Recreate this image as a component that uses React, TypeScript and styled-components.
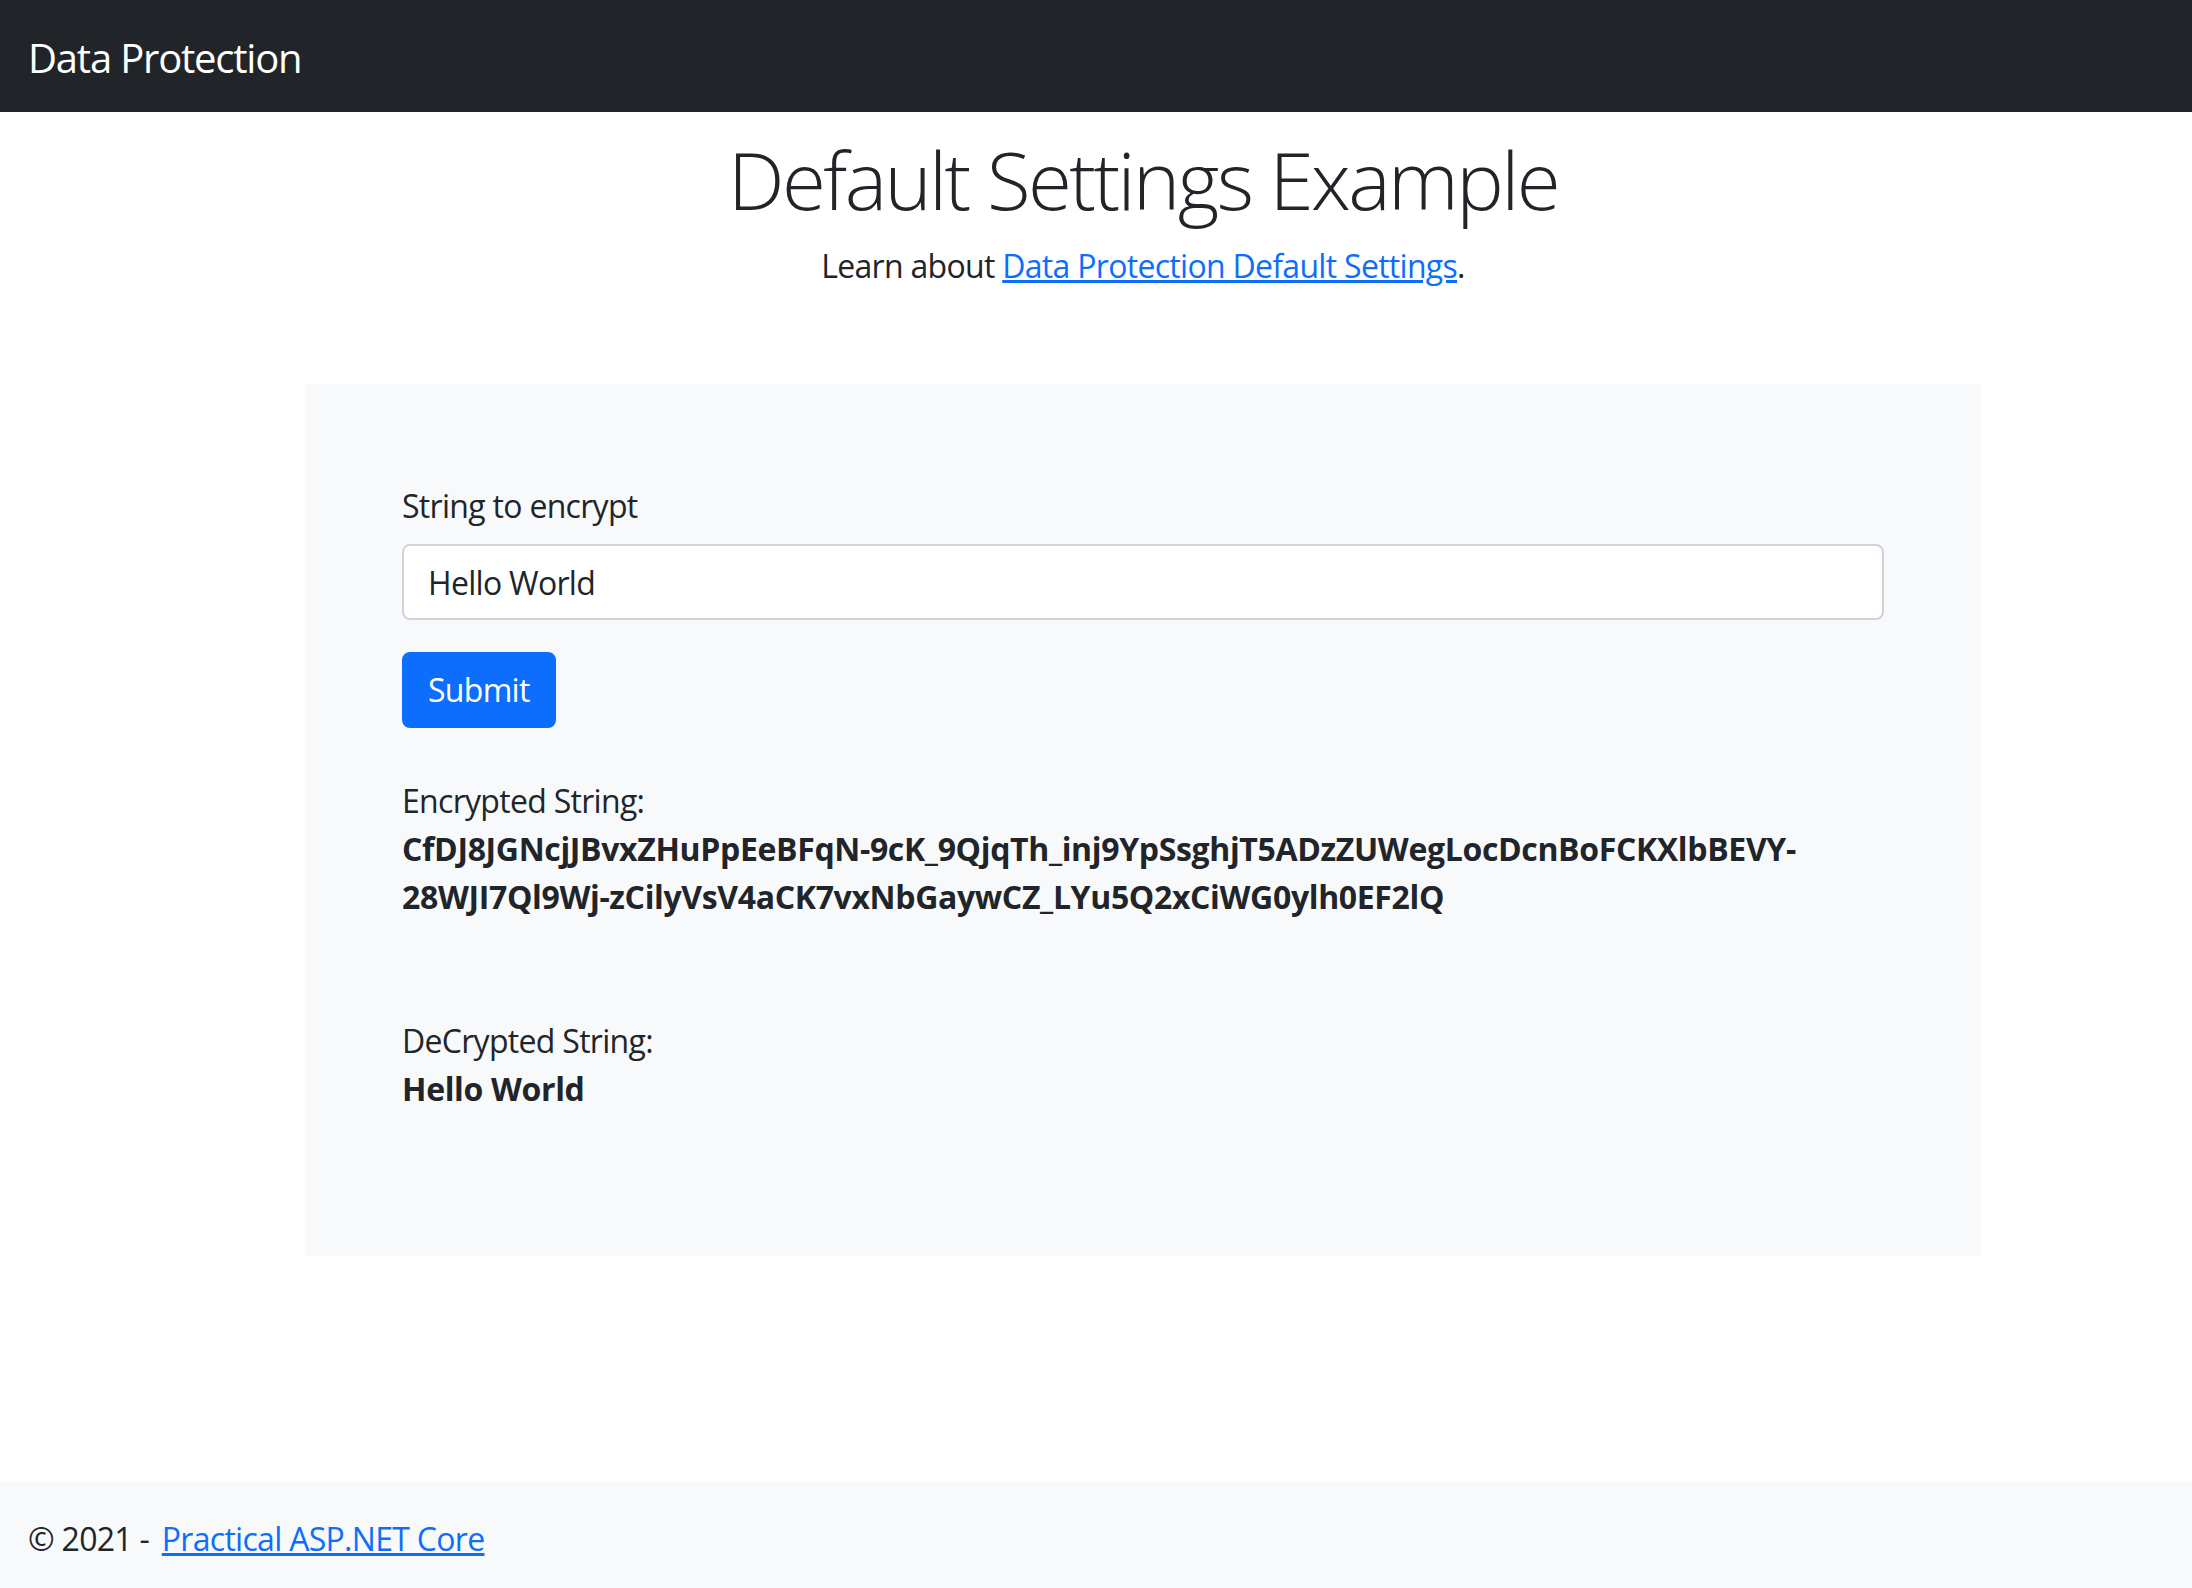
import React from 'react';
import styled, { createGlobalStyle } from 'styled-components';

const GlobalStyle = createGlobalStyle`
  html, body {
    margin: 0;
    padding: 0;
  }
  body {
    font-family: "Open Sans", "Noto Sans", sans-serif;
    font-size: 32px;
    line-height: 1.5;
    letter-spacing: -0.7px;
    color: #212529;
    background: #fff;
  }
  * {
    box-sizing: border-box;
  }
`;

const Page = styled.div`
  min-height: 100vh;
  display: flex;
  flex-direction: column;
`;

const NavBar = styled.header`
  height: 112px;
  background: #212529;
  display: flex;
  align-items: center;
  padding: 4px 28px 0;
`;

const Brand = styled.a`
  color: #fff;
  font-size: 40px;
  line-height: 1.5;
  letter-spacing: -1.2px;
  text-decoration: none;
`;

const Main = styled.main`
  width: 1676px;
  margin-left: 305px;
  padding-top: 19px;
`;

const Title = styled.h1`
  margin: 0 0 15px;
  font-size: 80px;
  font-weight: 300;
  line-height: 1.2;
  letter-spacing: -2.6px;
  text-align: center;
`;

const Lead = styled.p`
  margin: 0;
  text-align: center;
`;

const Link = styled.a`
  color: #0d6efd;
  text-decoration: underline;
`;

const Panel = styled.section`
  margin-top: 94px;
  background: #f8f9fa;
  padding: 98px 97px 143px;
`;

const Label = styled.label`
  display: block;
  margin-bottom: 14px;
`;

const Input = styled.input`
  display: block;
  width: 100%;
  height: 76px;
  padding: 12px 24px;
  font: inherit;
  letter-spacing: inherit;
  color: #212529;
  background: #fff;
  border: 2px solid #ced4da;
  border-radius: 8px;
  outline: none;
`;

const Button = styled.button`
  margin-top: 32px;
  height: 76px;
  padding: 0 24px;
  font: inherit;
  letter-spacing: inherit;
  color: #fff;
  background: #0d6efd;
  border: 2px solid #0d6efd;
  border-radius: 8px;
  cursor: pointer;
`;

const Result = styled.div<{ $gap: number }>`
  margin-top: ${(p) => p.$gap}px;
`;

const Value = styled.strong`
  display: block;
  font-weight: 700;
  letter-spacing: -0.35px;
  overflow-wrap: break-word;
`;

const Footer = styled.footer`
  margin-top: auto;
  height: 106px;
  background: #f8f9fa;
  display: flex;
  align-items: center;
  padding: 8px 28px 0;
`;

const FooterLink = styled(Link)`
  margin-left: 5px;
`;

const encrypted =
  'CfDJ8JGNcjJBvxZHuPpEeBFqN-9cK_9QjqTh_inj9YpSsghjT5ADzZUWegLocDcnBoFCKXlbBEVY-28WJI7Ql9Wj-zCilyVsV4aCK7vxNbGaywCZ_LYu5Q2xCiWG0ylh0EF2lQ';

export default function App() {
  return (
    <Page>
      <GlobalStyle />
      <NavBar>
        <Brand href="#">Data Protection</Brand>
      </NavBar>
      <Main>
        <Title>Default Settings Example</Title>
        <Lead>
          Learn about <Link href="#">Data Protection Default Settings</Link>.
        </Lead>
        <Panel>
          <form onSubmit={(e) => e.preventDefault()}>
            <Label htmlFor="plain">String to encrypt</Label>
            <Input id="plain" type="text" defaultValue="Hello World" />
            <Button type="submit">Submit</Button>
          </form>
          <Result $gap={49}>
            Encrypted String:
            <Value>{encrypted}</Value>
          </Result>
          <Result $gap={96}>
            DeCrypted String:
            <Value>Hello World</Value>
          </Result>
        </Panel>
      </Main>
      <Footer>
        <span>
          © 2021 - <FooterLink href="#">Practical ASP.NET Core</FooterLink>
        </span>
      </Footer>
    </Page>
  );
}
